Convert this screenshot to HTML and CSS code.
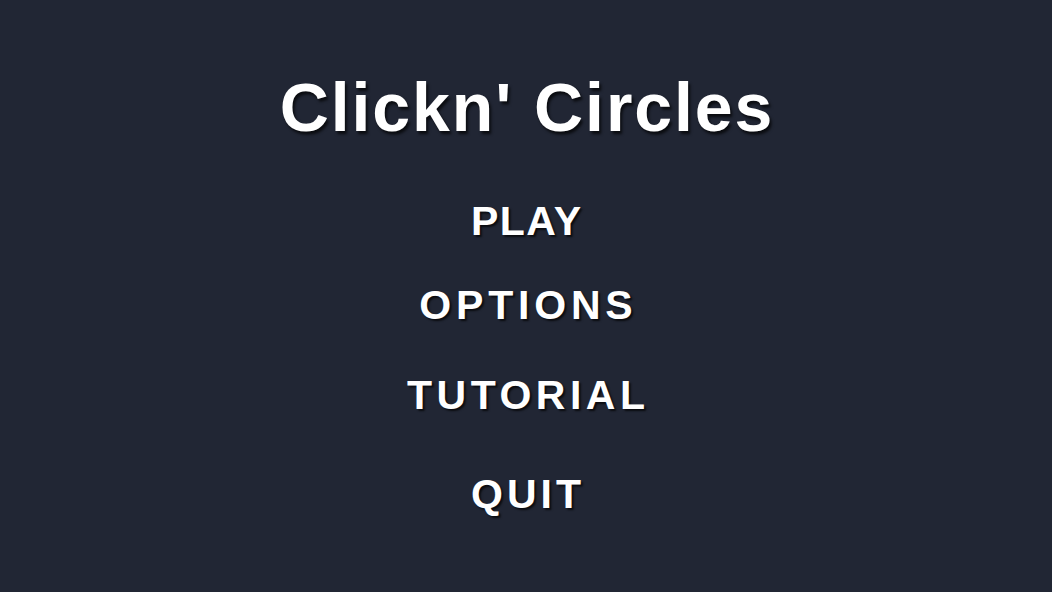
FILE: index.html
```html
<!DOCTYPE html>
<html lang="en">
<head>
<meta charset="utf-8">
<title>Clickn' Circles</title>
<link rel="stylesheet" href="styles.css">
</head>
<body>
<main class="menu">
  <h1 class="title">Clickn' Circles</h1>
  <nav class="items">
    <a class="item item-play">PLAY</a>
    <a class="item item-options">OPTIONS</a>
    <a class="item item-tutorial">TUTORIAL</a>
    <a class="item item-quit">QUIT</a>
  </nav>
</main>
</body>
</html>
```
FILE: styles.css
```css
html, body {
  margin: 0;
  padding: 0;
  height: 100%;
  background: #212634;
}
body {
  font-family: "Liberation Sans", Arial, sans-serif;
  color: #ffffff;
  overflow: hidden;
}
.menu {
  display: flex;
  flex-direction: column;
  align-items: center;
  padding-top: 73px;
}
.title {
  margin: 0 0 0 2px;
  font-size: 68px;
  line-height: 68px;
  font-weight: bold;
  letter-spacing: 1.9px;
  text-shadow: 2px 3px 3px rgba(0, 0, 0, 0.7);
}
.items {
  display: flex;
  flex-direction: column;
  align-items: center;
}
.item {
  display: block;
  font-size: 41px;
  line-height: 41px;
  font-weight: bold;
  text-shadow: 2px 2px 2px rgba(0, 0, 0, 0.7);
}
.item-play {
  margin-top: 60px;
  letter-spacing: 1.5px;
  padding-left: 1.5px;
}
.item-options {
  margin-top: 42.5px;
  letter-spacing: 4.8px;
  padding-left: 4.8px;
}
.item-tutorial {
  margin-top: 49.5px;
  letter-spacing: 4.5px;
  padding-left: 4.5px;
}
.item-quit {
  margin-top: 57.5px;
  letter-spacing: 4px;
  padding-left: 4px;
}
```
